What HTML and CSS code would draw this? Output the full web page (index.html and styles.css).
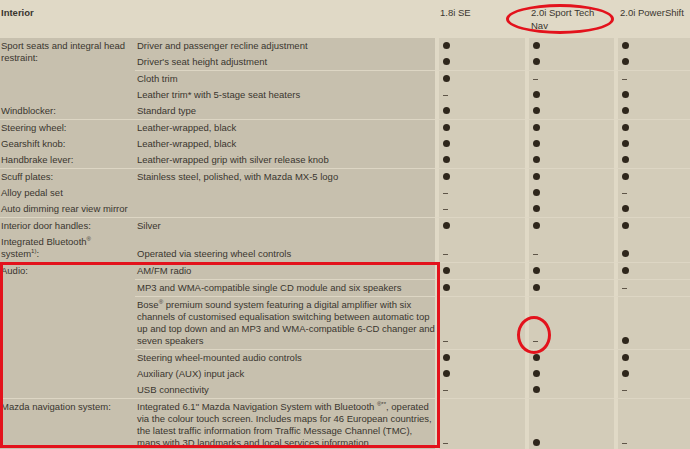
FILE: index.html
```html
<!DOCTYPE html>
<html lang="en">
<head>
  <meta charset="UTF-8" />
  <meta name="viewport" content="width=device-width, initial-scale=1.0" />
  <title>Interior specification</title>
  <link rel="stylesheet" href="styles.css">
</head>
<body>
  <div class="page">
    <table class="spec">
      <colgroup>
        <col class="c-label">
        <col class="c-desc">
        <col class="c-v1">
        <col class="c-v2">
        <col class="c-v3">
      </colgroup>
      <thead>
        <tr>
          <th class="title">Interior</th>
          <th></th>
          <th class="model">1.8i SE</th>
          <th class="model">2.0i Sport Tech Nav</th>
          <th class="model last">2.0i PowerShift</th>
        </tr>
      </thead>
      <tbody>
        <!-- seats -->
        <tr>
          <td class="label" rowspan="4">Sport seats and integral head<br>restraint:</td>
          <td class="desc">Driver and passenger recline adjustment</td>
          <td class="val"><i class="dot"></i></td><td class="val"><i class="dot"></i></td><td class="val"><i class="dot"></i></td>
        </tr>
        <tr>
          <td class="desc">Driver's seat height adjustment</td>
          <td class="val"><i class="dot"></i></td><td class="val"><i class="dot"></i></td><td class="val"><i class="dot"></i></td>
        </tr>
        <tr class="sub">
          <td class="desc">Cloth trim</td>
          <td class="val"><i class="dot"></i></td><td class="val"><i class="dash"></i></td><td class="val"><i class="dash"></i></td>
        </tr>
        <tr>
          <td class="desc">Leather trim* with 5-stage seat heaters</td>
          <td class="val"><i class="dash"></i></td><td class="val"><i class="dot"></i></td><td class="val"><i class="dot"></i></td>
        </tr>
        <tr>
          <td class="label">Windblocker:</td>
          <td class="desc">Standard type</td>
          <td class="val"><i class="dot"></i></td><td class="val"><i class="dot"></i></td><td class="val"><i class="dot"></i></td>
        </tr>

        <!-- trim -->
        <tr class="grp">
          <td class="label">Steering wheel:</td>
          <td class="desc">Leather-wrapped, black</td>
          <td class="val"><i class="dot"></i></td><td class="val"><i class="dot"></i></td><td class="val"><i class="dot"></i></td>
        </tr>
        <tr>
          <td class="label">Gearshift knob:</td>
          <td class="desc">Leather-wrapped, black</td>
          <td class="val"><i class="dot"></i></td><td class="val"><i class="dot"></i></td><td class="val"><i class="dot"></i></td>
        </tr>
        <tr>
          <td class="label">Handbrake lever:</td>
          <td class="desc">Leather-wrapped grip with silver release knob</td>
          <td class="val"><i class="dot"></i></td><td class="val"><i class="dot"></i></td><td class="val"><i class="dot"></i></td>
        </tr>

        <tr class="grp">
          <td class="label">Scuff plates:</td>
          <td class="desc">Stainless steel, polished, with Mazda MX-5 logo</td>
          <td class="val"><i class="dot"></i></td><td class="val"><i class="dot"></i></td><td class="val"><i class="dot"></i></td>
        </tr>
        <tr>
          <td class="label">Alloy pedal set</td>
          <td class="desc"></td>
          <td class="val"><i class="dash"></i></td><td class="val"><i class="dot"></i></td><td class="val"><i class="dash"></i></td>
        </tr>
        <tr>
          <td class="label" colspan="2">Auto dimming rear view mirror</td>
          <td class="val"><i class="dash"></i></td><td class="val"><i class="dot"></i></td><td class="val"><i class="dot"></i></td>
        </tr>

        <tr class="grp">
          <td class="label">Interior door handles:</td>
          <td class="desc">Silver</td>
          <td class="val"><i class="dot"></i></td><td class="val"><i class="dot"></i></td><td class="val"><i class="dot"></i></td>
        </tr>
        <tr>
          <td class="label">Integrated Bluetooth<sup>®</sup><br>system<sup>1)</sup>:</td>
          <td class="desc">Operated via steering wheel controls</td>
          <td class="val"><i class="dash"></i></td><td class="val"><i class="dash"></i></td><td class="val"><i class="dot"></i></td>
        </tr>

        <!-- audio -->
        <tr class="grp">
          <td class="label" rowspan="6">Audio:</td>
          <td class="desc">AM/FM radio</td>
          <td class="val"><i class="dot"></i></td><td class="val"><i class="dot"></i></td><td class="val"><i class="dot"></i></td>
        </tr>
        <tr class="sub">
          <td class="desc">MP3 and WMA-compatible single CD module and six speakers</td>
          <td class="val"><i class="dot"></i></td><td class="val"><i class="dot"></i></td><td class="val"><i class="dash"></i></td>
        </tr>
        <tr class="sub">
          <td class="desc">Bose<sup>®</sup> premium sound system featuring a digital amplifier with six<br>channels of customised equalisation switching between automatic top<br>up and top down and an MP3 and WMA-compatible 6-CD changer and<br>seven speakers</td>
          <td class="val"><i class="dash"></i></td><td class="val"><i class="dash"></i></td><td class="val"><i class="dot"></i></td>
        </tr>
        <tr class="sub">
          <td class="desc">Steering wheel-mounted audio controls</td>
          <td class="val"><i class="dot"></i></td><td class="val"><i class="dot"></i></td><td class="val"><i class="dot"></i></td>
        </tr>
        <tr>
          <td class="desc">Auxiliary (AUX) input jack</td>
          <td class="val"><i class="dot"></i></td><td class="val"><i class="dot"></i></td><td class="val"><i class="dot"></i></td>
        </tr>
        <tr>
          <td class="desc">USB connectivity</td>
          <td class="val"><i class="dash"></i></td><td class="val"><i class="dot"></i></td><td class="val"><i class="dash"></i></td>
        </tr>

        <tr class="grp">
          <td class="label">Mazda navigation system:</td>
          <td class="desc">Integrated 6.1" Mazda Navigation System with Bluetooth <sup>®**</sup>, operated<br>via the colour touch screen. Includes maps for 46 European countries,<br>the latest traffic information from Traffic Message Channel (TMC),<br>maps with 3D landmarks and local services information</td>
          <td class="val"><i class="dash"></i></td><td class="val"><i class="dot"></i></td><td class="val"><i class="dash"></i></td>
        </tr>
      </tbody>
    </table>

    <!-- red markup drawn over the sheet -->
    <div class="mark mark-head"></div>
    <div class="mark mark-dash"></div>
    <div class="mark mark-audio"></div>
  </div>
</body>
</html>
```

FILE: styles.css
```css
:root {
  --paper: #e0d9c6;
  --left-bg: #c7c0ae;
  --val-bg: #d3ccb9;
  --line: #ddd6c4;
  --ink: #3a362f;
  --dot: #2f271c;
  --red: #e3121c;
}

* { box-sizing: border-box; margin: 0; padding: 0; }

body {
  background: var(--paper);
  color: var(--ink);
  font-family: "Liberation Sans", Arial, sans-serif;
  font-size: 9.5px;
  overflow: hidden;
}

.page {
  position: relative;
  width: 690px;
  height: 449px;
  overflow: hidden;
}

.spec {
  width: 690px;
  table-layout: fixed;
  border-collapse: separate;
  border-spacing: 0;
}
.c-label { width: 135px; }
.c-desc  { width: 300px; }
.c-v1    { width: 90px; }
.c-v2    { width: 89px; }
.c-v3    { width: 76px; }

.spec th {
  height: 38px;
  padding: 7px 0 0 1px;
  vertical-align: top;
  text-align: left;
  font-weight: normal;
  line-height: 12.5px;
}
.spec th.title { font-weight: bold; }
.spec th.model { padding-left: 6px; padding-right: 4px; }
.spec th.model:nth-child(3) { padding-left: 5px; }
.spec th.last { white-space: nowrap; }

.spec td {
  padding: 2px 2px;
  line-height: 12px;
  background: var(--left-bg);
  white-space: nowrap;
}
.spec td.label { vertical-align: top; padding-left: 1px; }
.spec td.desc  { vertical-align: bottom; }
.spec td.val {
  vertical-align: bottom;
  background: var(--val-bg);
  border-left: 4px solid var(--paper);
  padding-left: 4px;
}
.spec tr td.val:first-of-type { border-left-width: 3px; }

/* group rule spans the whole row, sub rule skips the label column */
.spec tr.grp td { border-top: 1px solid var(--line); }
.spec tr.sub td.desc,
.spec tr.sub td.val { border-top: 1px solid var(--line); }

sup { font-size: 6px; line-height: 0; vertical-align: 4px; }

.dot, .dash { display: inline-block; vertical-align: middle; }
.dot {
  width: 7px; height: 7px;
  border-radius: 50%;
  background: var(--dot);
  margin-top: -2px;
}
.dash {
  width: 5px; height: 1px;
  background: #5e5548;
}

.mark {
  position: absolute;
  border: 3px solid var(--red);
}
.mark-head {
  left: 506px; top: 4px;
  width: 108px; height: 30px;
  border-radius: 50%;
}
.mark-dash {
  left: 517px; top: 316px;
  width: 34px; height: 38px;
  border-radius: 50%;
}
.mark-audio {
  left: 0; top: 262px;
  width: 440px; height: 186px;
}
```
